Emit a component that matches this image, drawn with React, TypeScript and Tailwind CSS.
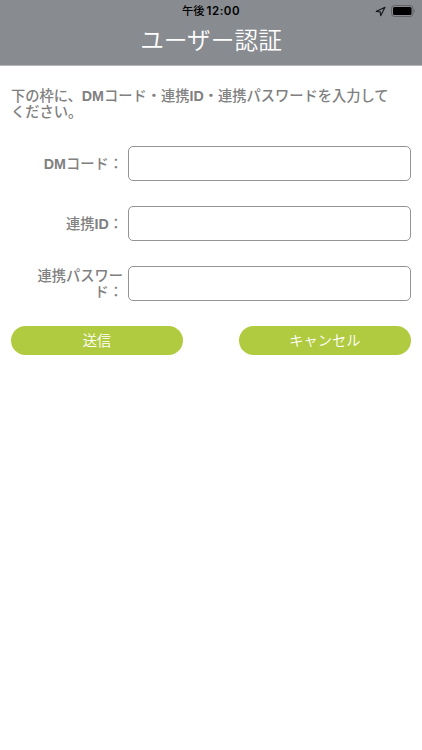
const fields = [
  { id: 'dm', latin: 'DM', before: '', after: 'コード：' },
  { id: 'link-id', latin: 'ID', before: '連携', after: '：' },
  { id: 'link-password', latin: '', before: '連携パスワード：', after: '' },
];

function StatusBar() {
  return (
    <div className="grid h-[22px] grid-cols-3 items-center text-black">
      <span />
      <span className="flex items-center justify-center gap-[2px] whitespace-nowrap pt-px text-[11.3px] leading-[21px]">
        <span className="font-medium">午後</span>
        <span className="font-['Inter'] text-[11.5px] font-semibold tracking-[0.5px]">12:00</span>
      </span>
      <span className="flex items-center justify-end gap-[5px] pr-[6px]">
        <svg width="11" height="11" viewBox="0 0 11 11" fill="none" stroke="#15171a" strokeWidth="1.1" strokeLinejoin="round">
          <path d="M10 1.2 L1.2 5.4 L5.2 5.9 L5.7 9.8 Z" />
        </svg>
        <svg width="25" height="12" viewBox="0 0 25 12">
          <rect x="0.5" y="0.5" width="21.5" height="11" rx="3" fill="none" stroke="#606367" />
          <rect x="2" y="2" width="18.5" height="8" rx="1.5" fill="#000" />
          <path d="M23.2 4.2 Q24.6 6 23.2 7.8 Z" fill="#54575b" />
        </svg>
      </span>
    </div>
  );
}

export default function App() {
  return (
    <div className="min-h-screen bg-white font-['Liberation_Sans','Noto_Sans_CJK_JP',sans-serif] text-[#808080]">
      <header className="h-[66px] border-b border-[#b4b6b8] bg-[#888b8f]">
        <StatusBar />
        <h1 className="pt-[1px] text-center text-[23.7px] font-[350] leading-[36px] text-white">ユーザー認証</h1>
      </header>
      <main className="px-[11px] pt-[22px]">
        <p className="whitespace-nowrap text-[14.25px] font-medium leading-[16px]">
          下の枠に、<b className="font-bold">DM</b>コード・連携<b className="font-bold">ID</b>・連携パスワードを入力して<br />ください。
        </p>
        <form className="mt-[26px]">
          <div className="flex flex-col gap-[25px]">
            {fields.map((field) => (
              <div key={field.id} className="flex h-[35px] items-center">
                <label htmlFor={field.id} className="w-[112px] shrink-0 pl-[20px] text-right text-[14.25px] font-medium leading-[16px] [line-break:anywhere]">
                  {field.before}<b className="font-bold">{field.latin}</b>{field.after}
                </label>
                <input id={field.id} className="ml-[5px] h-[35px] min-w-0 flex-1 rounded-[5px] border border-[#949494] bg-white px-2 outline-none" />
              </div>
            ))}
          </div>
          <div className="mt-[25px] flex justify-between text-[14.25px] font-[350] text-white">
            <button type="button" className="h-[29px] w-[172px] rounded-full bg-[#b1cb40] pt-[2px]">送信</button>
            <button type="button" className="h-[29px] w-[172px] rounded-full bg-[#b1cb40] pt-[2px]">キャンセル</button>
          </div>
        </form>
      </main>
    </div>
  );
}
